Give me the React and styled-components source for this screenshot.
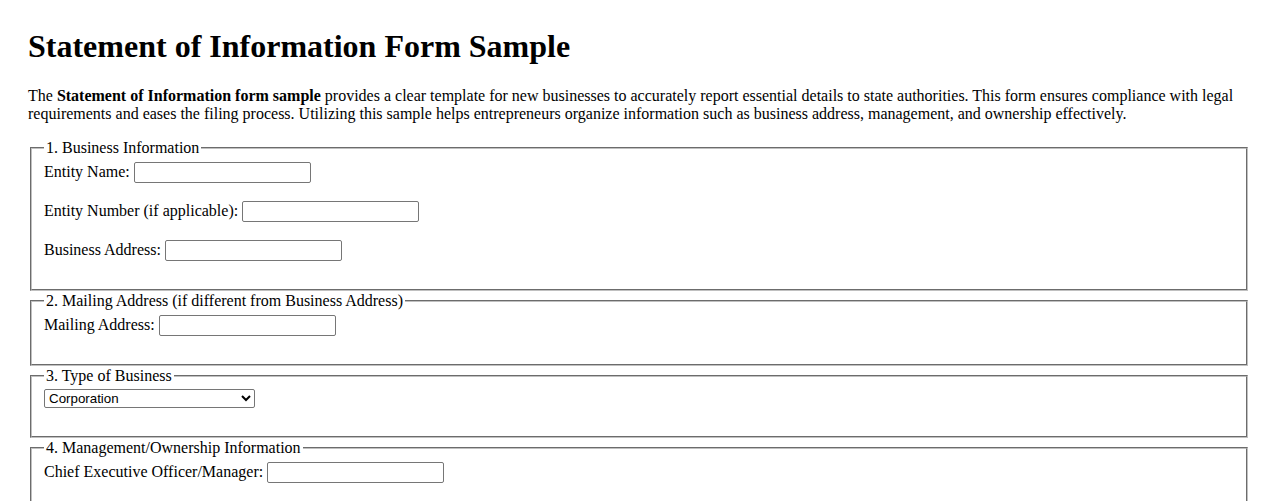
import React from 'react';
import styled, { createGlobalStyle } from 'styled-components';

const GlobalStyle = createGlobalStyle`
  body {
    margin: 8px;
    font-family: "Liberation Serif", "Times New Roman", serif;
    font-size: 16px;
    color: #000;
    background: #fff;
  }
`;

const Page = styled.div`
  padding: 20px;
`;

const Title = styled.h1`
  font-size: 32px;
  font-weight: bold;
  margin: 0 0 22px;
`;

const Intro = styled.p`
  margin: 16px 0;
  line-height: normal;
`;

const Section = styled.fieldset`
  margin: 0 2px 1px;
  padding: 5px 12px 10px;
  border: 2px groove #c0c0c0;
  min-width: min-content;
`;

const Legend = styled.legend`
  padding: 0 2px;
`;

const Row = styled.div`
  margin-bottom: 18px;
`;

const Label = styled.label`
  margin-right: 4px;
`;

const TextInput = styled.input`
  box-sizing: border-box;
  width: 177px;
  height: 21px;
  padding: 1px 2px;
  border: 1px solid #767676;
  border-radius: 2px;
  font-family: "Liberation Sans", Arial, sans-serif;
  font-size: 13.33px;
  vertical-align: baseline;
`;

const Select = styled.select`
  display: block;
  box-sizing: border-box;
  width: 211px;
  height: 19px;
  margin-top: -1px;
  border: 1px solid #767676;
  border-radius: 2px;
  background: #fff;
  font-family: "Liberation Sans", Arial, sans-serif;
  font-size: 13.33px;
  color: #000;
`;

const Field = ({ id, label }) => (
  <Row>
    <Label htmlFor={id}>{label}</Label>
    <TextInput type="text" id={id} name={id} />
  </Row>
);

const App = () => {
  return (
    <Page>
      <GlobalStyle />
      <Title>Statement of Information Form Sample</Title>
      <Intro>
        The <strong>Statement of Information form sample</strong> provides a clear template for new
        businesses to accurately report essential details to state authorities. This form ensures
        compliance with legal requirements and eases the filing process. Utilizing this sample helps
        entrepreneurs organize information such as business address, management, and ownership
        effectively.
      </Intro>
      <form>
        <Section>
          <Legend>1. Business Information</Legend>
          <Field id="entityName" label="Entity Name:" />
          <Field id="entityNumber" label="Entity Number (if applicable):" />
          <Field id="businessAddress" label="Business Address:" />
        </Section>
        <Section>
          <Legend>2. Mailing Address (if different from Business Address)</Legend>
          <Field id="mailingAddress" label="Mailing Address:" />
        </Section>
        <Section>
          <Legend>3. Type of Business</Legend>
          <Row>
            <Select id="businessType" name="businessType" defaultValue="corporation">
              <option value="corporation">Corporation</option>
              <option value="llc">Limited Liability Company</option>
              <option value="partnership">Partnership</option>
              <option value="sole">Sole Proprietorship</option>
            </Select>
          </Row>
        </Section>
        <Section>
          <Legend>4. Management/Ownership Information</Legend>
          <Field id="ceo" label="Chief Executive Officer/Manager:" />
          <Field id="secretary" label="Secretary:" />
          <Field id="cfo" label="Chief Financial Officer:" />
        </Section>
      </form>
    </Page>
  );
};

export default App;
